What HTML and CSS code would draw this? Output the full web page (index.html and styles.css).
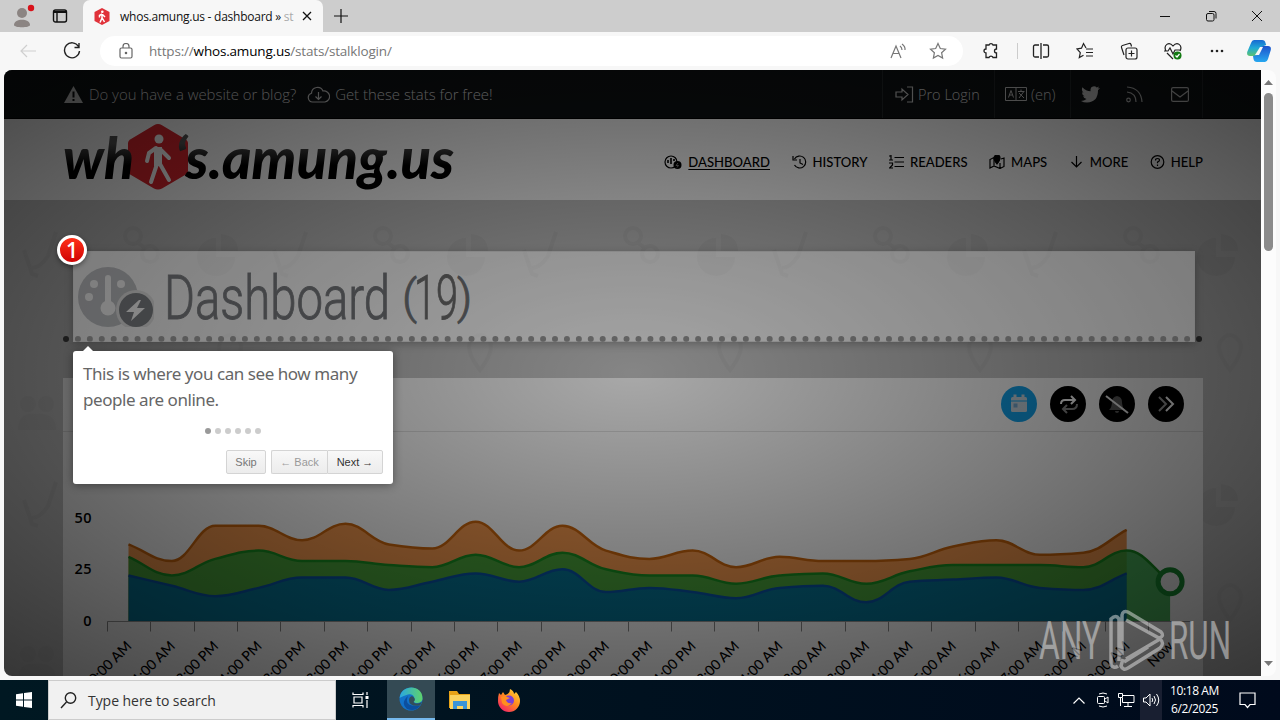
FILE: index.html
```
<!DOCTYPE html>
<html lang="en">
<head>
    <meta charset="UTF-8">
    <title>whos.amung.us - dashboard</title>
    <link rel="stylesheet" href="styles.css">
</head>
<body>
    <div class="tabstrip">
        <svg class="avatar" width="26" height="28" viewBox="0 0 26 28"><circle cx="12" cy="11" r="5" fill="#8b8482"/><path d="M4 23c0-7 16-7 16 0 0 3-16 3-16 0z" fill="#8b8482"/><circle cx="21" cy="6" r="3.2" fill="#d8121a"/></svg>
        <svg class="tab-actions" width="16" height="16" viewBox="0 0 16 16" fill="none" stroke="#111" stroke-width="1.4"><rect x="1.5" y="2" width="13" height="12" rx="2"/><path d="M1.5 4h13" stroke-width="2"/><path d="M5 4v10"/></svg>
        <div class="tab">
            <svg width="16" height="17" viewBox="0 0 16 17"><path d="M8 0l7.5 4v9L8 17 .5 13V4z" fill="#e0323a"/><circle cx="8.3" cy="3.7" r="1.3" fill="#fff"/><path d="M8 6l-2.5 1.5v2M8 6v4l-2 4.500M8.200 10l2.300 4M8.500 6.500l2.500 2.500" stroke="#fff" stroke-width="1.500" fill="none"/></svg>
            <span class="tab-title">whos.amung.us - dashboard » <i>st</i></span>
            <svg width="10" height="10" viewBox="0 0 10 10" stroke="#111" stroke-width="1.3"><path d="M1 1l8 8M9 1l-8 8"/></svg>
        </div>
        <svg class="new-tab" width="14" height="14" viewBox="0 0 14 14" stroke="#111" stroke-width="1.2"><path d="M7 0v14M0 7h14"/></svg>
        <div class="window-buttons">
            <svg width="12" height="12" viewBox="0 0 12 12" stroke="#111"><path d="M1 6.500h10"/></svg>
            <svg width="12" height="12" viewBox="0 0 12 12" fill="none" stroke="#111"><rect x="1.500" y="3.500" width="7.500" height="7.500" rx="1.500"/><path d="M4 1.500h5a2 2 0 0 1 2 2V8.500"/></svg>
            <svg width="12" height="12" viewBox="0 0 12 12" stroke="#111"><path d="M1 1l10 10M11 1L1 11"/></svg>
        </div>
    </div>

    <div class="toolbar">
        <svg class="back" width="18" height="16" viewBox="0 0 18 16" fill="none" stroke="#cfcfcf" stroke-width="1.200"><path d="M17 8H2M8 2L2 8l6 6"/></svg>
        <svg class="reload" width="18" height="18" viewBox="0 0 18 18" fill="none" stroke="#222" stroke-width="1.400"><path d="M15.500 4.500A7.500 7.500 0 1 0 16.500 9M16 1v4.500h-4.500"/></svg>
        <div class="address">
            <svg class="lock" width="14" height="16" viewBox="0 0 14 16" fill="none" stroke="#666" stroke-width="1.200"><rect x="1" y="5" width="12" height="10" rx="1.500"/><path d="M4 5V3.500a3 3 0 0 1 6 0V5"/><circle cx="7" cy="10" r=".7" fill="#666"/></svg>
            <span class="url">https://<b>whos.amung.us</b>/stats/stalklogin/</span>
            <svg class="read" width="17" height="16" viewBox="0 0 17 16" fill="none" stroke="#777" stroke-width="1.200"><path d="M1 15L6 3l5 12M3 10.500h6M10 3q2 1.500 2 4M12 1q3.500 2.500 3 6"/></svg>
            <svg width="18" height="18" viewBox="0 0 18 18" fill="none" stroke="#777" stroke-width="1.200"><path d="M9 1.500l2.300 5 5.200.6-3.900 3.600 1 5.300L9 13.400 4.400 16l1-5.300L1.500 7.100l5.200-.6z"/></svg>
        </div>
        <div class="tools">
            <svg width="18" height="18" viewBox="0 0 18 18" fill="none" stroke="#222" stroke-width="1.300"><path d="M4 3h3a2.100 2.100 0 0 1 4 0h3.500v4a2 2 0 0 0 0 4v4.500H11a2.100 2.100 0 0 0-4 0H4V11a2 2 0 0 1 0-4z"/></svg>
            <span class="divider"></span>
            <svg width="18" height="18" viewBox="0 0 18 18" fill="none" stroke="#222" stroke-width="1.300"><path d="M7 3H3a1.500 1.500 0 0 0-1.500 1.500v9A1.500 1.500 0 0 0 3 15h4M11 3h4a1.500 1.500 0 0 1 1.500 1.500v9A1.500 1.500 0 0 1 15 15h-4M9 1v16"/></svg>
            <svg width="18" height="18" viewBox="0 0 18 18" fill="none" stroke="#222" stroke-width="1.200"><path d="M10 6L7.500 1.500 5.500 6.200 1 7l3.300 3.600-1 5 4.200-2.300M10 7h7M10 10.500h7M10 14h7"/></svg>
            <svg width="18" height="18" viewBox="0 0 18 18" fill="none" stroke="#222" stroke-width="1.200"><path d="M4 13L1.500 5.500Q1 4 2.500 3.500L9 1.500q1.500-.4 2 1l.5 2"/><rect x="6" y="6" width="11" height="11" rx="2"/><path d="M11.500 8.500v6M8.500 11.500h6"/></svg>
            <svg width="18" height="18" viewBox="0 0 18 18" fill="none" stroke="#222" stroke-width="1.200"><path d="M2 9C-1 3 5-1 9 4c4-5 10-1 7 5M3 11l6 6M0 9h4l2-3 3 6 2-4h5"/><circle cx="13.500" cy="13.500" r="4" fill="#127a12" stroke="none"/><path d="M11.500 13.500l1.500 1.500 2.500-3" stroke="#fff"/></svg>
            <svg width="18" height="18" viewBox="0 0 18 18" fill="#222"><circle cx="4" cy="9" r="1.300"/><circle cx="9" cy="9" r="1.300"/><circle cx="14" cy="9" r="1.300"/></svg>
        </div>
        <svg class="copilot" width="24" height="22" viewBox="0 0 24 22">
            <defs>
                <linearGradient id="cpa" x2="0" y2="1"><stop offset="0" stop-color="#1769d2"/><stop offset=".5" stop-color="#20a9d6"/><stop offset="1" stop-color="#5cc36f"/></linearGradient>
                <linearGradient id="cpb" x2="0" y2="1"><stop offset="0" stop-color="#1d52cc"/><stop offset="1" stop-color="#27a8ef"/></linearGradient>
            </defs>
            <path d="M7 0h8q3 0 3.500 3l.7 2-4.700 2-4 8q-.6 1-3 1H3q-3.500 0-2.800-4L4 3q1-3 3-3z" fill="url(#cpa)"/>
            <path d="M16 6h5q3.500 0 2.800 4L21 19q-1 3-3 3h-8q-3 0-3.500-3L6 16l4-1 4-7q.6-2 2-2z" fill="url(#cpb)"/>
            <path d="M13 7h3l-4 8H8z" fill="#f7f7f7"/>
        </svg>
    </div>

    <div class="content">
        <div class="viewport">
            <div class="topbar">
                <svg class="warn" width="19" height="17" viewBox="0 0 19 17"><path d="M9.500 0L19 17H0z" fill="#c6c6c6"/><path d="M9.500 5.500v6M9.500 13v2" stroke="#0b0d0e" stroke-width="2"/></svg>
                <span class="promo">Do you have a website or blog?</span>
                <svg class="cloud" width="23" height="17" viewBox="0 0 23 17" fill="none" stroke="#ccc" stroke-width="1.200"><path d="M5.500 16a4.500 4.500 0 0 1-1-8.800A6 6 0 0 1 16 5a5.500 5.500 0 0 1 2 11zM11.500 6v7M8.500 10.500l3 3 3-3"/></svg>
                <span class="promo">Get these stats for free!</span>
                <div class="toplinks">
                    <span class="login"><svg width="19" height="17" viewBox="0 0 19 17" fill="none" stroke="#ccc" stroke-width="1.200"><path d="M12 1h5.500v15H12M1 6h6V3l6 5.500L7 14v-3H1z"/></svg> Pro Login</span>
                    <span class="lang"><svg width="22" height="14" viewBox="0 0 22 14" fill="none" stroke="#ccc"><path d="M.5.500h21v13H.5zM11 .500v13M3.500 10.500l2.500-7 2.500 7M4.500 8h3M13 4.500h6.500M16 2.500v2M14 11l4.500-6M14 6l5 5"/></svg> (en)</span>
                    <span class="social">
                        <svg width="19" height="17" viewBox="0 0 19 17" fill="#ccc"><path d="M0 15q3 0 5.500-2Q3 12.500 2 10.200h1.700Q1 9 .9 6.200l1.600.5Q0 4.500 1.400 1.300 5 5.300 9.500 5.300 9 .5 13 .3q1.700 0 2.700 1.200l2.500-.9-1.500 2L19 2l-2 2.200Q17 16 6 16.500q-3.500 0-6-1.500z"/></svg>
                        <svg width="17" height="17" viewBox="0 0 17 17" fill="none" stroke="#bbb" stroke-width="1.200"><circle cx="2.500" cy="14" r="1.800"/><path d="M1 6q9 1 9 10M1 1q14 1 15 15"/></svg>
                        <svg width="18" height="15" viewBox="0 0 18 15" fill="none" stroke="#ccc" stroke-width="1.200"><rect x=".6" y=".6" width="16.800" height="13.800" rx="1.500"/><path d="M1 4l8 6 8-6"/></svg>
                    </span>
                </div>
            </div>

            <div class="header">
                <svg class="logo" width="400" height="80" viewBox="0 0 400 80">
                    <defs><linearGradient id="ink" x2="0" y2="1"><stop offset=".3" stop-color="#555"/><stop offset=".62" stop-color="#000"/></linearGradient></defs>
                    <path d="M95 4q2 0 4 1.200L122 19q3 1.500 3 4.500v27q0 3-3 4.500L99 68.500q-4 2-8 0L68 55q-3-1.500-3-4.500v-27q0-3 3-4.500L91 5.200Q93 4 95 4z" fill="#e0262e"/>
                    <circle cx="96" cy="19" r="4.500" fill="#fff"/>
                    <path d="M93 28l-7 5-2 8M94 44l-6 18M97 44l9 16M98 30l8 8" stroke="#fff" stroke-width="4" fill="none" stroke-linecap="round"/>
                    <path d="M95 27v19" stroke="#fff" stroke-width="8"/>
                    <text x="0" y="59" textLength="71" lengthAdjust="spacingAndGlyphs">wh</text>
                    <text x="112" y="59" textLength="279" lengthAdjust="spacingAndGlyphs">‘s.amung.us</text>
                </svg>
                <div class="nav">
                    <span class="active"><svg width="18" height="14" viewBox="0 0 18 14" fill="none" stroke="#000" stroke-width="1.200"><circle cx="7" cy="7" r="6"/><path d="M7 3v6M4 5v3M10 4v2" stroke-width="1.600"/><circle cx="13.500" cy="10" r="4" fill="#000" stroke="none"/><path d="M14 8l-2 2.500h2.500L13 12.500" stroke="#999" stroke-width=".8"/></svg><u>DASHBOARD</u></span>
                    <span><svg width="15" height="14" viewBox="0 0 15 14" fill="none" stroke="#000" stroke-width="1.200"><path d="M2.500 4a6 6 0 1 1 0 6M1 1v4h4M8 4v4l3 1.500"/></svg>HISTORY</span>
                    <span><svg width="15" height="14" viewBox="0 0 15 14" fill="none" stroke="#000" stroke-width="1.200"><path d="M5.500 2.500H15M5.500 7H15M5.500 11.500H15M2 0v5M0 1h2M0 5h4M0 8h3.500v2L.5 13H4"/></svg>READERS</span>
                    <span><svg width="16" height="14" viewBox="0 0 16 14" fill="none" stroke="#000" stroke-width="1.200"><path d="M5 2.500L1 4.500V13l4-2 6 2.500 4-2V3l-3 1M5 3v8M11 8v5"/><path d="M8 9Q5 5 5 3a3 3 0 0 1 6 0q0 2-3 6z" fill="#000"/></svg>MAPS</span>
                    <span><svg width="15" height="14" viewBox="0 0 15 14" fill="none" stroke="#000" stroke-width="1.200"><path d="M7.500 1v11M2.500 7L7.500 12l5-5"/></svg>MORE</span>
                    <span><svg width="15" height="14" viewBox="0 0 15 14" fill="none" stroke="#000" stroke-width="1.200"><circle cx="7.500" cy="7" r="6.300"/><path d="M5.500 5.500q0-2 2-2t2 1.800q0 1-2 1.800v1.200M7.500 9.500v1.500"/></svg>HELP</span>
                </div>
            </div>

            <div class="main">
                <svg class="doodles" width="1257" height="480">
                    <defs>
                        <pattern id="doodle" width="250" height="250" patternUnits="userSpaceOnUse">
                            <g fill="none" stroke="#888" stroke-width="4">
                                <circle cx="129" cy="36" r="8"/><circle cx="146" cy="54" r="8"/><path d="M133 42l9 7"/>
                                <path d="M20 50l8 24 6 2M52 32l-8 24q-8 12-16 12"/>
                            </g>
                            <path d="M212 57V38a19 19 0 1 0 19 19zM217 34v17h17q0-15-17-17z" fill="#888"/>
                            <circle cx="24" cy="204" r="8" fill="#999"/><circle cx="42" cy="204" r="8" fill="#999"/><path d="M14 230q0-18 18-16 20-2 20 16z" fill="#999"/>
                            <path d="M226 170q-14-18-10-28 10-14 20 0 4 10-10 28z" fill="none" stroke="#999" stroke-width="4"/>
                        </pattern>
                    </defs>
                    <rect width="1257" height="480" fill="url(#doodle)"/>
                </svg>
                <div class="title-row">
                    <svg width="76" height="60" viewBox="0 0 76 60"><circle cx="30" cy="30" r="30" fill="#6c6f74"/><g fill="#c4c4c4"><circle cx="16" cy="17" r="4"/><circle cx="43" cy="17" r="4"/><circle cx="11" cy="30" r="4"/><rect x="27" y="8" width="6" height="32" rx="3"/><circle cx="30" cy="41" r="7.500"/></g><circle cx="58" cy="43" r="20" fill="#a4a4a4"/><circle cx="58" cy="43" r="17" fill="#040a10"/><path d="M61 33L48 45h8l-3 9 14-13h-8l4-8z" fill="#ccc"/></svg>
                    <svg class="title" width="310" height="66" viewBox="0 0 310 66">
                        <text x="-2" y="55" textLength="226" lengthAdjust="spacingAndGlyphs">Dashboard</text>
                        <text class="paren" x="236" y="49">(</text>
                        <text class="count" x="248" y="55" textLength="44" lengthAdjust="spacingAndGlyphs">19</text>
                        <text class="paren" x="291" y="49">)</text>
                    </svg>
                </div>
                <div class="panel">
                    <div class="panel-head">
                        <svg width="36" height="36" viewBox="0 0 36 36"><circle cx="18" cy="18" r="18" fill="#12a0e8"/><rect x="10" y="11" width="16" height="15" rx="1.500" fill="#c4d2dc"/><path d="M10 15h16" stroke="#12a0e8"/><path d="M14 8.500v4M22 8.500v4" stroke="#c4d2dc" stroke-width="3"/><path d="M12.500 17.500h4v4h-4z" fill="#72a5cb"/></svg>
                        <svg width="36" height="36" viewBox="0 0 36 36" fill="none"><circle cx="18" cy="18" r="18" fill="#000"/><path d="M11 18q0-4 4-4h10M21 10l4 4-4 4" stroke="#fff" stroke-width="2"/><path d="M27 18q0 5-5 5h-8M17 19l-4 4 4 4" stroke="#888" stroke-width="2"/></svg>
                        <svg width="36" height="36" viewBox="0 0 36 36"><circle cx="18" cy="18" r="18" fill="#000"/><path d="M10 24q3-3 3-8 0-5 5-6 5 1 5 6 0 5 3 8zM16 25h4q0 2-2 2t-2-2z" fill="#5a5a5a"/><path d="M7 10l22 17" stroke="#eee" stroke-width="2"/></svg>
                        <svg width="36" height="36" viewBox="0 0 36 36" fill="none" stroke-width="2"><circle cx="18" cy="18" r="18" fill="#000"/><path d="M11 11l7 7-7 7" stroke="#999"/><path d="M18 11l7 7-7 7" stroke="#fff"/></svg>
                    </div>
                    <svg id="chart" width="1140" height="244" viewBox="0 0 1140 244"></svg>
                </div>
            </div>

            <div class="overlay"></div>
            <div class="helper"><span class="step">1</span></div>
            <div class="tooltip">
                <p>This is where you can see how many people are online.</p>
                <div class="bullets"><i class="on"></i><i></i><i></i><i></i><i></i><i></i></div>
                <div class="tip-buttons">
                    <button class="skip">Skip</button>
                    <button class="prev">← Back</button>
                    <button class="next">Next →</button>
                </div>
            </div>
        </div>
        <div class="scrollbar">
            <svg width="9" height="5" viewBox="0 0 9 5"><path d="M4.500 0L9 5H0z" fill="#777"/></svg>
            <div class="thumb"></div>
            <svg width="9" height="5" viewBox="0 0 9 5"><path d="M4.500 5L9 0H0z" fill="#777"/></svg>
        </div>
    </div>

    <svg class="watermark" width="192" height="64" viewBox="0 0 192 64">
        <text x="0" y="50" textLength="62" lengthAdjust="spacingAndGlyphs">ANY</text>
        <path d="M80 52V10q-3-5-8 0v46q3 4 7 1M83 46V6q1-5 6-3l33 20q4 4-2 6L87 11M87 50l34-20M84 50l-2 7q2 5 7 2l32-20q5-5 0-9M85 53l24-15"/>
        <text x="130" y="50" textLength="62" lengthAdjust="spacingAndGlyphs">RUN</text>
    </svg>

    <div class="taskbar">
        <div class="start"><svg width="16" height="16" viewBox="0 0 16 16" fill="#fff"><path d="M0 2.200l7-1v6.300H0zM8 1l8-1v7.500H8zM0 8.500h7v6.300l-7-1zM8 8.500h8V16l-8-1z"/></svg></div>
        <div class="search">
            <svg width="17" height="17" viewBox="0 0 17 17" fill="none" stroke="#222" stroke-width="1.400"><circle cx="10.500" cy="6" r="5.200"/><path d="M6.500 10L1 16"/></svg>
            <span>Type here to search</span>
        </div>
        <div class="app"><svg width="18" height="16" viewBox="0 0 18 16" fill="none" stroke="#fff" stroke-width="1.200"><path d="M1 .500v2h10v-2M1 15.500v-2h10v2M2 5h8v6H2zM15 0v3M15 8v8"/><path d="M13.500 5.500h3" stroke-width="3"/></svg></div>
        <div class="app current"><svg width="24" height="24" viewBox="0 0 24 24">
            <defs><linearGradient id="eg" x2="1"><stop offset="0" stop-color="#2aa7e1"/><stop offset="1" stop-color="#5fd36a"/></linearGradient></defs>
            <circle cx="12" cy="12" r="11.500" fill="#1272c9"/><path d="M.7 11C2-3 24-3 23.500 12c-.5 5-9 5-9 2 3-5-3-8-7-6-4 1-6.800 3-6.800 3z" fill="url(#eg)"/><path d="M9 9q-5 11 12 10-5 6-13 3Q1 16 9 9z" fill="#0c4f9e"/><path d="M13 9q5 3 1.500 6 2 3 8.500 0l-2 3.500Q10 20 10 13q0-3 3-4z" fill="#334e59"/></svg></div>
        <div class="app"><svg width="22" height="20" viewBox="0 0 22 20"><path d="M0 1h8l2 3h11v14H0z" fill="#e8a317"/><path d="M1 5h20v14H1z" fill="#fbd35e"/><path d="M4 19v-8h14v8h-4v-3H8v3z" fill="#3a94d6"/></svg></div>
        <div class="app"><svg width="24" height="24" viewBox="0 0 24 24">
            <defs><linearGradient id="ff" x1="1" y1="0" x2=".2" y2="1"><stop offset="0" stop-color="#ffe13c"/><stop offset=".5" stop-color="#ff8a1e"/><stop offset="1" stop-color="#f4206a"/></linearGradient></defs>
            <path d="M2 5l2 2 2-3 2 3q5-1 5-6 4 2 4 5l2-2q4 4 4 9a11 11 0 0 1-22 0q0-5 1-8z" fill="url(#ff)"/><circle cx="12" cy="12.500" r="5" fill="#7a3fd6"/><path d="M4 9q4-2 6 0l3 1-4 2q1 4 6 3-6 6-10 0z" fill="#ff8f1f"/></svg></div>
        <div class="tray">
            <svg width="12" height="7" viewBox="0 0 12 7" fill="none" stroke="#fff" stroke-width="1.200"><path d="M.5 6.500L6 1l5.500 5.500"/></svg>
            <svg width="12" height="16" viewBox="0 0 12 16" fill="none" stroke="#fff"><rect x=".5" y="4.500" width="7" height="7" rx="1"/><path d="M8 7l3-2v6L8 9M2 2q4-2 8 0M2 14q4 2 8 0"/></svg>
            <svg width="17" height="14" viewBox="0 0 17 14" fill="none" stroke="#fff"><path d="M5 2.500h11v7H4.500V5M10 9.500v4M6 13.500h8"/><path d="M.5.500h4v4h-4zM2.500 5v8"/></svg>
            <div class="volume"><svg width="17" height="14" viewBox="0 0 17 14" fill="none" stroke="#fff"><path d="M.5 5h2.500l4-4v12l-4-4H.5zM9 5q1.500 2 0 4M11 3q3 4 0 8M13.500 1q4.500 6 0 12"/></svg></div>
            <div class="clock">10:18 AM<br>6/2/2025</div>
            <svg width="17" height="17" viewBox="0 0 17 17" fill="none" stroke="#fff" stroke-width="1.200"><path d="M1 1h15v11.500h-5L8.500 15.500 6 12.500H1z"/></svg>
        </div>
    </div>

    <script>
const svg = document.getElementById('chart');
const STEP = 43.4;
const LEFT = 65.5;
const BASE = 189;
const UNIT = 2.07;

const series = [
    { name: 'max', stroke: '#c8640c', fill: '#ee8f42', opacity: 0.95, data: [37,29,46,46,39,47,37,35,48,34,46,34,30,34,26,31,29,29,30,36,39,32,33,44] },
    { name: 'now', stroke: '#178c20', fill: '#1ea034', opacity: 0.8, data: [31,22,30,34,29,29,27,26,32,26,33,25,22,22,18,22,23,18,24,27,27,27,26,34,19] },
    { name: 'min', stroke: '#0850a0', fill: '#006c98', opacity: 0.92, data: [22,17,12,16,21,21,15,19,23,19,25,14,16,14,11,16,17,9,19,20,21,16,15,23] }
];

const labels = [];
for (let i = 0; i < 24; i++) {
    const hour = (10 + i) % 24;
    labels.push((hour % 12 || 12) + ':00 ' + (hour < 12 ? 'AM' : 'PM'));
}
labels.push('Now');

// smooth line through the points, flat at local peaks and dips
function spline(points) {
    const slope = points.map((p, i) => {
        if (i === 0 || i === points.length - 1) return null;
        const a = points[i].y - points[i - 1].y;
        const b = points[i + 1].y - points[i].y;
        return a * b <= 0 ? 0 : 2 * a * b / (a + b) / STEP;
    });
    let d = `M${points[0].x} ${points[0].y}`;
    for (let i = 1; i < points.length; i++) {
        const p = points[i - 1], q = points[i], h = STEP * 0.4;
        const sp = slope[i - 1] === null ? (q.y - p.y) / STEP : slope[i - 1];
        const sq = slope[i] === null ? (q.y - p.y) / STEP : slope[i];
        d += `C${p.x + h} ${p.y + sp * h} ${q.x - h} ${q.y - sq * h} ${q.x} ${q.y}`;
    }
    return d;
}

let out = '';
series.forEach(s => {
    const points = s.data.map((v, i) => ({ x: LEFT + i * STEP, y: BASE - v * UNIT }));
    const d = spline(points);
    const last = points[points.length - 1].x;
    out += `<path d="${d}L${last} ${BASE}L${LEFT} ${BASE}z" fill="${s.fill}" fill-opacity="${s.opacity}"/>`;
    out += `<path d="${d}" fill="none" stroke="${s.stroke}" stroke-width="2.5"/>`;
});

out += `<path d="M44.500 189.500H${LEFT + 24.500 * STEP}" stroke="#999"/>`;
for (let i = 0; i <= 24; i++) {
    const x = Math.round(LEFT + (i - 0.5) * STEP) + 0.5;
    out += `<path d="M${x} 189.500v10" stroke="#888"/>`;
}
labels.forEach((text, i) => {
    const x = LEFT + i * STEP + 4;
    out += `<text class="hour" transform="translate(${x} 215) rotate(-45)">${text}</text>`;
});
[50, 25, 0].forEach(v => {
    out += `<text class="scale" x="29" y="${BASE - v * UNIT + 5}">${v}</text>`;
});
out += `<circle cx="${LEFT + 24 * STEP}" cy="${BASE - 19 * UNIT}" r="12" fill="#f4f4f4" stroke="#178c30" stroke-width="5"/>`;
svg.innerHTML = out;
    </script>
</body>
</html>
```
FILE: styles.css
```
* {
    box-sizing: border-box;
    margin: 0;
    padding: 0;
}

body {
    width: 1280px;
    height: 720px;
    overflow: hidden;
    display: flex;
    flex-direction: column;
    background: #f7f7f7;
    font-family: "Open Sans", "Noto Sans", sans-serif;
}

svg {
    display: block;
    flex: none;
}

/* browser */
.tabstrip {
    height: 32px;
    display: flex;
    align-items: center;
    background: #cdcdcd;
    padding-left: 10px;
    flex: none;
}

.tab-actions {
    margin-left: 16px;
}

.tab {
    width: 240px;
    height: 32px;
    margin-left: 15px;
    padding: 0 10px 0 11px;
    background: #f7f7f7;
    border-radius: 7px 7px 0 0;
    display: flex;
    align-items: center;
}

.tab-title {
    width: 175px;
    margin: 0 7px 0 10px;
    font-size: 12px;
    letter-spacing: -0.25px;
    white-space: nowrap;
    color: #111;
}

.tab-title i {
    font-style: normal;
    color: #aaa;
}

.new-tab {
    margin-left: 11px;
}

.window-buttons {
    display: flex;
    gap: 34px;
    margin-left: auto;
    margin-right: 17px;
}

.toolbar {
    height: 38px;
    display: flex;
    align-items: center;
    flex: none;
}

.back {
    margin-left: 19px;
}

.reload {
    margin-left: 26px;
}

.address {
    width: 863px;
    height: 30px;
    margin-left: 19px;
    padding: 0 16px 0 19px;
    background: #fff;
    border-radius: 15px;
    display: flex;
    align-items: center;
}

.url {
    margin-left: 16px;
    font-size: 13.5px;
    letter-spacing: -0.18px;
    color: #777;
}

.url b {
    font-weight: 400;
    color: #000;
}

.read {
    margin-left: auto;
    margin-right: 22px;
}

.tools {
    display: flex;
    align-items: center;
    gap: 26px;
    margin-left: 19px;
}

.divider {
    width: 1px;
    height: 16px;
    margin: 0 -12px 0 -9px;
    background: #ccc;
}

.copilot {
    margin-left: 21px;
}

.content {
    height: 610px;
    padding: 0 4px 4px;
    display: flex;
    flex: none;
}

.viewport {
    position: relative;
    width: 1257px;
    height: 606px;
    overflow: hidden;
    border-radius: 8px 0 0 8px;
    background: #fff;
}

.scrollbar {
    width: 15px;
    background: #fcfcfc;
    border-radius: 0 8px 8px 0;
    display: flex;
    flex-direction: column;
    align-items: center;
    padding: 10px 0;
}

.thumb {
    width: 9px;
    height: 158px;
    margin-top: 8px;
    margin-bottom: auto;
    background: #8b8b8b;
    border-radius: 5px;
}

/* site */
.topbar {
    height: 49px;
    padding: 0 58px 0 60px;
    display: flex;
    align-items: center;
    background: #0e1214;
    border-bottom: 1px solid #000;
    color: #dcdcdc;
    font-size: 14.9px;
    font-weight: 300;
}

.promo {
    margin-left: 6px;
}

.cloud {
    margin-left: 11px;
}

.promo + .cloud + .promo {
    margin-left: 5px;
}

.toplinks {
    display: flex;
    margin-left: auto;
    height: 48px;
    font-size: 14.5px;
}

.toplinks > span {
    display: flex;
    align-items: center;
    gap: 4px;
    border-left: 1px solid #23282a;
}

.login {
    width: 112px;
    padding-left: 12px;
}

.lang {
    width: 76px;
    padding-left: 10px;
}

.toplinks .social {
    width: 133px;
    padding-left: 10px;
    gap: 26px;
    border-right: 1px solid #23282a;
}

.toplinks .social svg:last-child {
    margin-left: 2px;
}

.header {
    height: 81px;
    padding: 0 58px 0 59px;
    display: flex;
    align-items: center;
    justify-content: space-between;
    background: #fff;
}

.logo text {
    font-family: "Lato", sans-serif;
    font-size: 57px;
    font-weight: 900;
    font-style: italic;
    fill: url(#ink);
}

.nav {
    display: flex;
    gap: 21.5px;
    padding-top: 4px;
    font-family: "Lato", sans-serif;
    font-size: 13.1px;
    font-weight: 500;
    color: #000;
}

.nav span {
    display: flex;
    align-items: center;
    gap: 6px;
}

.nav u {
    text-underline-offset: 2px;
}

.main {
    position: relative;
    height: 476px;
    padding: 0 58px 0 59px;
    background: #c4c4c4;
}

.doodles {
    position: absolute;
    left: 0;
    top: 0;
    opacity: 0.12;
}

.title-row {
    position: relative;
    height: 142px;
    padding: 57px 0 0 15px;
    display: flex;
    align-items: center;
    gap: 12px;
    border-bottom: 6px dotted #444;
}

.title text {
    font-family: "Roboto", sans-serif;
    font-size: 61px;
    font-weight: 300;
    fill: #060a10;
    stroke: #060a10;
    stroke-width: 1px;
}

.title .paren {
    font-size: 47px;
}

.title .count {
    fill: #000;
    stroke: #000;
}

.panel {
    position: relative;
    height: 320px;
    margin-top: 36px;
    background: #f8f8f8;
}

.panel-head {
    height: 54px;
    display: flex;
    justify-content: flex-end;
    gap: 13px;
    padding: 8px 19px 0 0;
    border-bottom: 1px solid #ddd;
}

.hour {
    font-family: "Lato", sans-serif;
    font-size: 14px;
    font-weight: 500;
    text-anchor: end;
}

.scale {
    font-family: "Open Sans", sans-serif;
    font-size: 14.5px;
    font-weight: 600;
    letter-spacing: 0.4px;
    text-anchor: end;
}

/* intro tour */
.overlay {
    position: absolute;
    inset: 0;
    background: radial-gradient(ellipse farthest-corner at center, rgba(0, 0, 0, 0.4) 0, rgba(0, 0, 0, 0.9) 100%);
    opacity: 0.8;
}

.helper {
    position: absolute;
    left: 69px;
    top: 181px;
    width: 1122px;
    height: 91px;
    border: 1px solid rgba(119, 119, 119, 0.4);
    background: rgba(255, 255, 255, 0.26);
    box-shadow: 0 2px 8px rgba(0, 0, 0, 0.25);
}

.step {
    position: absolute;
    left: -17px;
    top: -17px;
    width: 30px;
    height: 30px;
    border: 3px solid #fff;
    border-radius: 50%;
    background: linear-gradient(#ff3019, #cf0404);
    box-shadow: 0 2px 5px rgba(0, 0, 0, 0.4);
    color: #fff;
    font-size: 21px;
    font-weight: 600;
    line-height: 24px;
    text-align: center;
}

.tooltip {
    position: absolute;
    left: 69px;
    top: 281px;
    width: 320px;
    height: 133px;
    padding: 10px;
    background: #fff;
    border-radius: 3px;
    box-shadow: 0 1px 10px rgba(0, 0, 0, 0.4);
}

.tooltip::before {
    content: "";
    position: absolute;
    left: 10px;
    top: -5px;
    border: 5px solid transparent;
    border-top: 0;
    border-bottom-color: #fff;
}

.tooltip p {
    font-family: "Noto Sans", sans-serif;
    font-size: 17px;
    line-height: 26px;
    letter-spacing: -0.44px;
    color: #666;
}

.bullets {
    display: flex;
    justify-content: center;
    gap: 4px;
    margin-top: 15px;
}

.bullets i {
    width: 6px;
    height: 6px;
    border-radius: 50%;
    background: #ccc;
}

.bullets .on {
    background: #999;
}

.tip-buttons {
    display: flex;
    justify-content: flex-end;
    margin-top: 16px;
}

.tip-buttons button {
    height: 24px;
    border: 1px solid #d4d4d4;
    background: linear-gradient(#f8f8f8, #ececec);
    font-family: "Liberation Sans", sans-serif;
    font-size: 11px;
    color: #333;
}

.tip-buttons .skip {
    width: 40px;
    margin-right: 5px;
    border-radius: 2px;
    color: #777;
}

.tip-buttons .prev {
    width: 56px;
    border-right: 0;
    border-radius: 2px 0 0 2px;
    color: #9a9a9a;
}

.tip-buttons .next {
    width: 56px;
    border-radius: 0 2px 2px 0;
}

.watermark {
    position: absolute;
    left: 1039px;
    top: 609px;
    opacity: 0.5;
}

.watermark text {
    font-family: "Roboto", sans-serif;
    font-size: 53px;
    fill: #e6e6e6;
}

.watermark path {
    fill: none;
    stroke: #e6e6e6;
    stroke-width: 3.5;
}

/* taskbar */
.taskbar {
    height: 40px;
    flex: none;
    display: flex;
    background: linear-gradient(90deg, #001822, #000a1c);
}

.start {
    width: 48px;
    display: flex;
    align-items: center;
    justify-content: center;
}

.search {
    width: 288px;
    padding-left: 11px;
    display: flex;
    align-items: center;
    gap: 11px;
    background: #f1f1f1;
    border: 1px solid #ccc;
    font-size: 14px;
    letter-spacing: -0.05px;
    color: #333;
}

.app {
    width: 49px;
    display: flex;
    align-items: center;
    justify-content: center;
}

.app.current {
    margin-left: 2px;
    width: 48px;
    background: #344a54;
    border-bottom: 2px solid #76b9ed;
}

.tray {
    display: flex;
    align-items: center;
    margin-left: auto;
    padding-right: 24px;
    color: #fff;
}

.tray > svg {
    margin-right: 12px;
}

.tray > svg:nth-of-type(2) {
    margin-right: 9px;
}

.tray > svg:nth-of-type(3) {
    margin-right: 5px;
}

.tray > svg:last-child {
    margin: 0;
}

.volume {
    width: 22px;
    height: 40px;
    display: flex;
    align-items: center;
    justify-content: center;
    background: #191f31;
}

.clock {
    width: 77px;
    font-size: 12px;
    line-height: 18px;
    letter-spacing: -0.4px;
    text-align: center;
    padding-right: 12px;
}
```
